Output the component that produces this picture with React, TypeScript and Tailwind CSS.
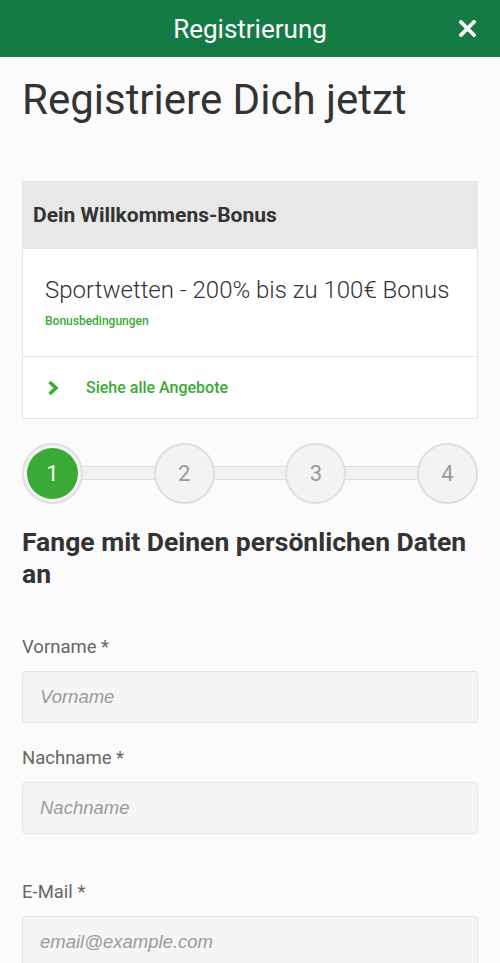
import React from 'react'

const font = { fontFamily: 'Roboto, "Noto Sans", sans-serif' }

function Chevron() {
  return (
    <svg width="12" height="16" viewBox="0 0 12 16" className="text-[#3aaa35]">
      <path d="M2.5 2 L9 8 L2.5 14" fill="none" stroke="currentColor" strokeWidth="3.6" strokeLinejoin="miter" />
    </svg>
  )
}

function Field({ label, placeholder, className = '' }: { label: string; placeholder: string; className?: string }) {
  return (
    <div className={className}>
      <label className="block text-[18.5px] leading-6 text-[#666]">{label}</label>
      <div className="mt-3 h-[52px] rounded-[3px] border border-[#e6e6e6] bg-[#f5f5f5] px-[17px] flex items-center">
        <span className="italic text-[18.5px] text-[#9a9a9a]" style={{ fontFamily: '"Liberation Sans", Arial, sans-serif' }}>
          {placeholder}
        </span>
      </div>
    </div>
  )
}

export default function App() {
  const steps = [1, 2, 3, 4]
  return (
    <div className="min-h-[963px] w-[500px] bg-[#fbfbfb] text-[#333]" style={font}>
      {/* header */}
      <div className="relative h-[57px] bg-[#147b45] flex items-center justify-center">
        <span className="text-white text-[26px] leading-8">Registrierung</span>
        <svg className="absolute right-[24px] top-[20px]" width="17" height="17" viewBox="0 0 17 17">
          <path d="M2 2 L15 15 M15 2 L2 15" stroke="#fff" strokeWidth="3.8" strokeLinecap="square" />
        </svg>
      </div>

      <div className="px-[22px]">
        <h1 className="mt-[19px] text-[42px] leading-[48px] text-[#333]">Registriere Dich jetzt</h1>

        {/* bonus card */}
        <div className="mt-[57px] border border-[#e6e6e6] bg-white">
          <div className="h-[67px] bg-[#e8e8e8] flex items-center px-[10px]">
            <span className="text-[21px] font-bold text-[#333]">Dein Willkommens-Bonus</span>
          </div>
          <div className="px-[22px] pt-[25px] pb-[27px] border-b border-[#e6e6e6]">
            <div className="text-[24px] leading-8 font-light text-[#333]">Sportwetten - 200% bis zu 100€ Bonus</div>
            <div className="mt-[7px] text-[12px] leading-4 font-medium text-[#3aaa35]">Bonusbedingungen</div>
          </div>
          <div className="h-[61px] flex items-center pl-[24px]">
            <Chevron />
            <span className="ml-[27px] text-[16px] font-medium text-[#3aaa35]">Siehe alle Angebote</span>
          </div>
        </div>

        {/* stepper */}
        <div className="relative mt-[24px] flex items-center justify-between">
          <div className="absolute left-[40px] right-[40px] top-[23px] h-[14px] border border-[#dcdcdc] bg-[#f1f1f1]" />
          {steps.map((n) => (
            <div
              key={n}
              className={`relative z-10 w-[61px] h-[61px] rounded-full border-2 border-[#dedede] flex items-center justify-center ${
                n === 1 ? 'bg-[#f4f4f4] p-[3px]' : 'bg-[#f3f3f3]'
              }`}
            >
              {n === 1 ? (
                <div className="w-full h-full rounded-full bg-[#3aa935] flex items-center justify-center text-white text-[22px]">1</div>
              ) : (
                <span className="text-[22px] text-[#999]">{n}</span>
              )}
            </div>
          ))}
        </div>

        <h2 className="mt-[22px] text-[26.5px] leading-8 font-bold text-[#333]">Fange mit Deinen persönlichen Daten an</h2>

        <Field className="mt-[45px]" label="Vorname *" placeholder="Vorname" />
        <Field className="mt-[23px]" label="Nachname *" placeholder="Nachname" />
        <Field className="mt-[46px]" label="E-Mail *" placeholder="email@example.com" />
      </div>
    </div>
  )
}
